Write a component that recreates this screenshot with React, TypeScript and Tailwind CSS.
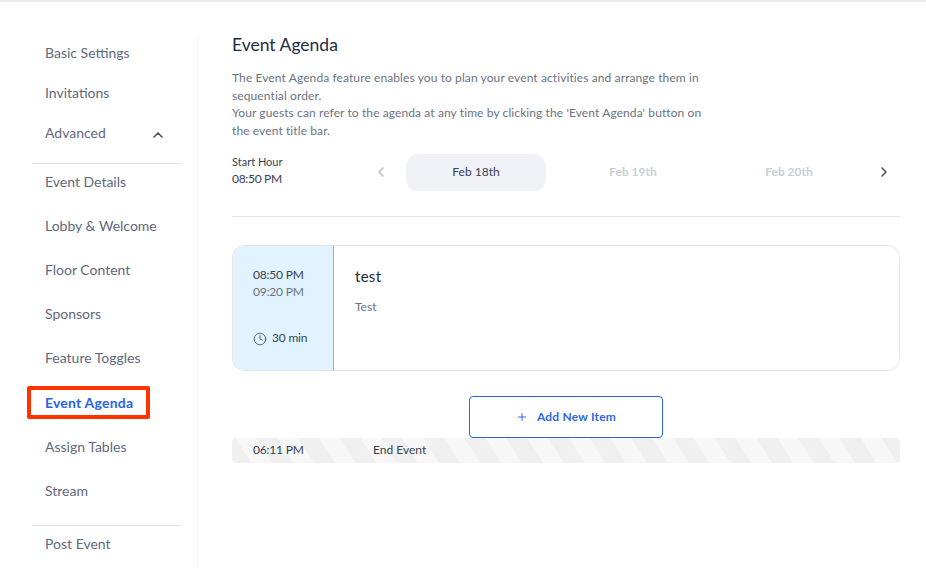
import { ChevronLeft, ChevronRight, ChevronUp, Clock, Plus } from 'lucide-react';

const topItems = ['Basic Settings', 'Invitations'];
const advancedItems = ['Event Details', 'Lobby & Welcome', 'Floor Content', 'Sponsors', 'Feature Toggles', 'Event Agenda', 'Assign Tables', 'Stream'];

const Sidebar = () => (
  <aside className="w-[198px] shrink-0 h-[533px] border-r border-[#f7f7f9] pl-8 pr-4 text-sm text-[#5f687c]">
    <div className="-mt-[2px]">
      {topItems.map((item) => (
        <div key={item} className="h-10 flex items-center pl-[13px]">{item}</div>
      ))}
      <div className="h-10 flex items-center justify-between pl-[13px] pr-[15px]">
        <span>Advanced</span>
        <ChevronUp size={16} strokeWidth={2.5} className="text-[#4b5563] mt-[3px]" />
      </div>
    </div>
    <div className="mt-[10px] border-t border-[#dfe1e6] -mb-[1px]">
      <div className="-mt-[4px]">
        {advancedItems.map((item) => (
          item === 'Event Agenda' ? (
            <div key={item} className="relative mt-[1px] h-11 flex items-center pl-[13px]">
              <span className="font-bold text-[#2563eb] tracking-[0.2px]">{item}</span>
              <div className="absolute left-[-5px] top-[5px] w-[123px] h-[33px] border-4 border-[#ff3300] rounded-[2px]" />
            </div>
          ) : (
            <div key={item} className="h-11 flex items-center pl-[13px]">{item}</div>
          )
        ))}
      </div>
    </div>
    <div className="mt-[13px] border-t border-[#dfe1e6] pl-[13px] pt-[8px]">Post Event</div>
  </aside>
);

const AgendaCard = () => (
  <div className="mt-7 h-[126px] flex rounded-xl border border-[#e4e6ea] overflow-hidden">
    <div className="w-[101px] shrink-0 bg-[#e0f3fe] border-r border-[#5cc3f5] pl-[20px] pt-[20px] text-xs tracking-[-0.2px]">
      <div className="text-[#374151] leading-[17px]">08:50 PM</div>
      <div className="text-[#6b7280] leading-[17px]">09:20 PM</div>
      <div className="mt-[30px] flex items-center gap-[5px] text-[#374151]">
        <Clock size={14} strokeWidth={1.5} className="text-[#4b5563] mt-[1px]" />
        <span>30 min</span>
      </div>
    </div>
    <div className="pl-[21px] pt-[20px]">
      <div className="text-[15px] leading-5 text-[#1e293b] tracking-[0.02em]">test</div>
      <div className="mt-[13px] text-xs text-[#6b7280]">Test</div>
    </div>
  </div>
);

export default function App() {
  return (
    <div className="w-[926px] h-[568px] overflow-hidden bg-white border-t-2 border-[#ececec] font-['Lato','Noto_Sans',sans-serif]">
      <div className="flex pt-[33px]">
        <Sidebar />
        <main className="w-[668px] ml-[34px]">
          <h1 className="text-[17.5px] leading-5 text-[#1e2a44]">Event Agenda</h1>
          <p className="mt-[14px] w-[480px] text-xs leading-[17.6px] tracking-[0.1px] text-[#6b7280]">
            The Event Agenda feature enables you to plan your event activities and arrange them in sequential order.
            <br />
            Your guests can refer to the agenda at any time by clicking the 'Event Agenda' button on the event title bar.
          </p>
          <div className="mt-[14px] h-[38px] flex items-center">
            <div className="w-[141px] shrink-0 text-[#374151] -mt-[4px]">
              <div className="text-[11px] leading-4">Start Hour</div>
              <div className="text-xs leading-4 mt-[1px] tracking-[-0.3px]">08:50 PM</div>
            </div>
            <ChevronLeft size={16} strokeWidth={2} className="text-[#b4b8c0]" />
            <div className="ml-[17px] w-[140px] h-[37px] rounded-xl bg-[#f1f2f7] flex items-center justify-center text-xs text-[#374151]">Feb 18th</div>
            <div className="ml-[9px] w-[156px] text-center text-xs font-bold text-[#c8ced7]">Feb 19th</div>
            <div className="w-[156px] text-center text-xs font-bold text-[#c8ced7]">Feb 20th</div>
            <ChevronRight size={16} strokeWidth={2.5} className="text-[#4b5563] ml-[9px]" />
          </div>
          <div className="mt-[25px] border-t border-[#e2e3e7]" />
          <AgendaCard />
          <div className="mt-[25px] flex justify-center">
            <button className="w-[194px] h-[42px] rounded-[4px] border border-[#2563eb] bg-white flex items-center justify-center gap-[9px] text-xs font-bold text-[#2f66ee] tracking-[0.2px]">
              <Plus size={12} strokeWidth={2} />
              Add New Item
            </button>
          </div>
          <div className="h-[25px] pb-[2px] flex items-center rounded-[4px] text-xs text-[#374151] bg-[repeating-linear-gradient(57.4deg,#f0f0f0_0,#f0f0f0_16.37px,#f7f7f7_16.37px,#f7f7f7_33.92px,#f0f0f0_33.92px,#f0f0f0_35.1px)]">
            <span className="w-[141px] pl-[21px] tracking-[-0.2px]">06:11 PM</span>
            <span>End Event</span>
          </div>
        </main>
      </div>
    </div>
  );
}
